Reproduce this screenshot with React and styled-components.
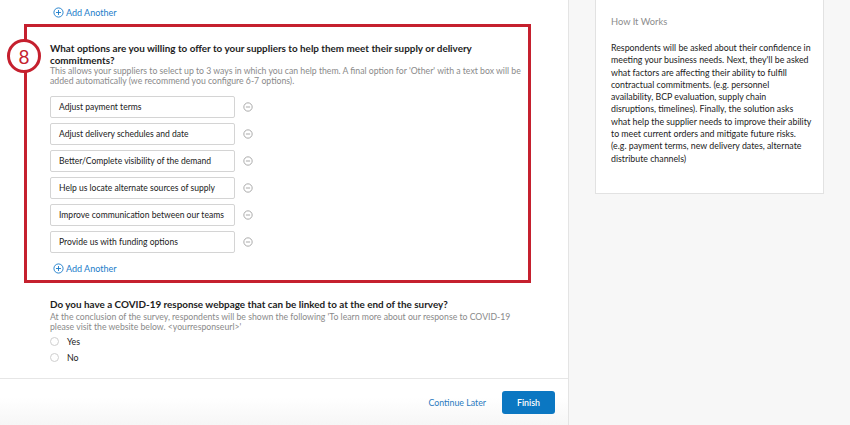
import styled, { createGlobalStyle } from 'styled-components';

const GlobalStyle = createGlobalStyle`
  html, body {
    margin: 0;
    padding: 0;
    background: #f7f7f7;
  }
  body {
    font-family: Lato, "Open Sans", Arial, sans-serif;
    color: #222;
  }
  * {
    box-sizing: border-box;
  }
`;

const Page = styled.div`
  display: flex;
  width: 850px;
  height: 425px;
  overflow: hidden;
`;

const Main = styled.div`
  width: 569px;
  flex-shrink: 0;
  display: flex;
  flex-direction: column;
  background: #fff;
  border-right: 1px solid #e4e4e4;
`;

const Body = styled.div`
  flex: 1;
  padding: 4px 0 0 24px;
  border-bottom: 1px solid #e6e6e6;
`;

const AddLink = styled.div`
  display: flex;
  align-items: center;
  gap: 2px;
  height: 16px;
  margin-left: ${(p) => p.$indent || 0}px;
  margin-top: ${(p) => p.$top || 0}px;
  color: #1a7cc9;
  font-size: 9px;
`;

const Highlight = styled.div`
  position: relative;
  width: 507px;
  margin-top: 4px;
  padding: 15px 0 4px 23px;
  border: 3px solid #c5202e;
`;

const StepBadge = styled.div`
  position: absolute;
  left: -20px;
  top: 12px;
  width: 34px;
  height: 34px;
  border-radius: 50%;
  border: 3px solid #c5202e;
  background: #fff;
  color: #c5202e;
  font-size: 19px;
  display: flex;
  align-items: center;
  justify-content: center;
`;

const Question = styled.div`
  font-weight: 700;
  font-size: 9.9px;
  line-height: 12px;
  color: #1d1d1d;
  white-space: nowrap;
`;

const Hint = styled.div`
  font-size: 8.7px;
  line-height: 10px;
  color: #8a8a8a;
  white-space: nowrap;
  margin-top: ${(p) => p.$top || 0}px;
`;

const OptionList = styled.div`
  display: flex;
  flex-direction: column;
  gap: 5px;
  margin-top: 10px;
`;

const OptionRow = styled.div`
  display: flex;
  align-items: center;
  gap: 8px;
`;

const OptionInput = styled.div`
  width: 185px;
  height: 22px;
  display: flex;
  align-items: center;
  padding-left: 8px;
  border: 1px solid #d4d4d4;
  border-radius: 2px;
  font-size: 8.55px;
  color: #222;
  white-space: nowrap;
`;

const Section = styled.div`
  margin-top: 15px;
  padding-left: 26px;
  padding-bottom: 12px;
`;

const RadioList = styled.div`
  display: flex;
  flex-direction: column;
  margin-top: 1px;
`;

const RadioRow = styled.label`
  display: flex;
  align-items: center;
  gap: 8px;
  height: 16px;
  font-size: 8.8px;
  color: #222;
`;

const RadioDot = styled.span`
  width: 9px;
  height: 9px;
  border-radius: 50%;
  border: 1px solid #cfcfcf;
  background: #fff;
`;

const Footer = styled.div`
  height: 46px;
  display: flex;
  align-items: center;
  justify-content: flex-end;
  gap: 16px;
  padding-right: 13px;
  background: linear-gradient(#fff 40%, #f6f6f6);
`;

const LinkButton = styled.span`
  color: #2a7bc0;
  font-size: 8.8px;
`;

const PrimaryButton = styled.button`
  width: 53px;
  height: 23px;
  border: none;
  border-radius: 3px;
  background: #0b77c2;
  color: #fff;
  font-family: inherit;
  font-size: 8.8px;
  font-weight: 600;
`;

const Aside = styled.div`
  flex: 1;
  padding-left: 26px;
`;

const InfoCard = styled.div`
  width: 229px;
  padding: 16px 10px 28px 15px;
  background: #fff;
  border: 1px solid #e2e2e2;
  border-top: none;
`;

const InfoTitle = styled.div`
  font-size: 9.3px;
  line-height: 12px;
  color: #8c8c8c;
`;

const InfoText = styled.p`
  margin: 14px 0 0;
  font-size: 8.8px;
  line-height: 12.3px;
  color: #222;
  white-space: nowrap;
`;

function PlusCircle() {
  return (
    <svg width='11' height='11' viewBox='0 0 12 12' fill='none' stroke='currentColor' strokeWidth='1'>
      <circle cx='6' cy='6' r='5' />
      <path d='M6 3.3v5.4M3.3 6h5.4' />
    </svg>
  );
}

function MinusCircle() {
  return (
    <svg width='10' height='10' viewBox='0 0 12 12' fill='none' stroke='#9a9a9a' strokeWidth='1'>
      <circle cx='6' cy='6' r='5' />
      <path d='M3.5 6h5' />
    </svg>
  );
}

const options = [
  'Adjust payment terms',
  'Adjust delivery schedules and date',
  'Better/Complete visibility of the demand',
  'Help us locate alternate sources of supply',
  'Improve communication between our teams',
  'Provide us with funding options',
];

const infoLines = [
  'Respondents will be asked about their confidence in',
  "meeting your business needs. Next, they'll be asked",
  'what factors are affecting their ability to fulfill',
  'contractual commitments. (e.g. personnel',
  'availability, BCP evaluation, supply chain',
  'disruptions, timelines). Finally, the solution asks',
  'what help the supplier needs to improve their ability',
  'to meet current orders and mitigate future risks.',
  '(e.g. payment terms, new delivery dates, alternate',
  'distribute channels)',
];

export default function App() {
  return (
    <>
      <GlobalStyle />
      <Page>
        <Main>
          <Body>
            <AddLink $indent={29}>
              <PlusCircle />
              Add Another
            </AddLink>
            <Highlight>
              <StepBadge>8</StepBadge>
              <Question>
                What options are you willing to offer to your suppliers to help them meet their supply or delivery
                <br />
                commitments?
              </Question>
              <Hint>
                This allows your suppliers to select up to 3 ways in which you can help them. A final option for 'Other' with a text box will be
                <br />
                added automatically (we recommend you configure 6-7 options).
              </Hint>
              <OptionList>
                {options.map((o) => (
                  <OptionRow key={o}>
                    <OptionInput>{o}</OptionInput>
                    <MinusCircle />
                  </OptionRow>
                ))}
              </OptionList>
              <AddLink $indent={3} $top={7}>
                <PlusCircle />
                Add Another
              </AddLink>
            </Highlight>
            <Section>
              <Question>Do you have a COVID-19 response webpage that can be linked to at the end of the survey?</Question>
              <Hint $top={2}>
                At the conclusion of the survey, respondents will be shown the following 'To learn more about our response to COVID-19
                <br />
                please visit the website below. &lt;yourresponseurl&gt;'
              </Hint>
              <RadioList>
                <RadioRow>
                  <RadioDot />
                  Yes
                </RadioRow>
                <RadioRow>
                  <RadioDot />
                  No
                </RadioRow>
              </RadioList>
            </Section>
          </Body>
          <Footer>
            <LinkButton>Continue Later</LinkButton>
            <PrimaryButton>Finish</PrimaryButton>
          </Footer>
        </Main>
        <Aside>
          <InfoCard>
            <InfoTitle>How It Works</InfoTitle>
            <InfoText>
              {infoLines.map((l, i) => (
                <span key={i}>
                  {l}
                  <br />
                </span>
              ))}
            </InfoText>
          </InfoCard>
        </Aside>
      </Page>
    </>
  );
}
